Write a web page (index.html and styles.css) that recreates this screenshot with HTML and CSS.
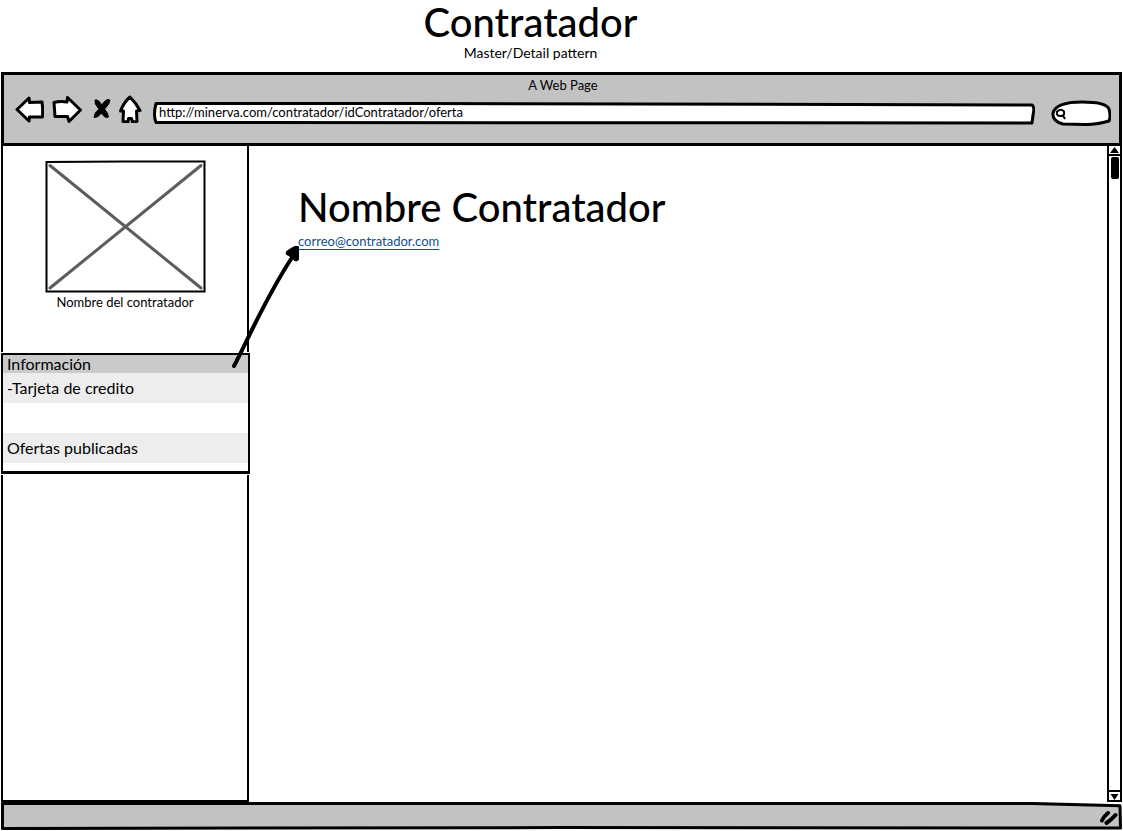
FILE: index.html
```html
<!DOCTYPE html>
<html lang="es">
<head>
<meta charset="utf-8">
<title>Contratador</title>
<link rel="stylesheet" href="styles.css">
</head>
<body>
<div class="page">
  <header class="intro">
    <h1 class="intro-title">Contratador</h1>
    <p class="intro-sub">Master/Detail pattern</p>
  </header>

  <div class="window">
    <div class="chrome">
      <div class="chrome-title">A Web Page</div>
      <div class="toolbar">
        <button class="tool" aria-label="Atrás">
          <svg width="29" height="28" viewBox="0 0 29 28"><path d="M2 14.5 L14 3 L14.5 7.5 L27 7 Q28 14 27.5 22 L14.5 22 L14 26 Z"/></svg>
        </button>
        <button class="tool" aria-label="Adelante">
          <svg width="30" height="28" viewBox="0 0 30 28"><path d="M2 7.500 Q8 6 15 7 L15.500 2.500 L28.500 15 L17 26.500 L15.500 21.500 L3 21.500 Z"/></svg>
        </button>
        <button class="tool tool-stop" aria-label="Detener">
          <svg width="18" height="22" viewBox="0 0 18 22"><path class="solid" d="M2 2 Q5 1 9 7 Q13 0 17 2 Q17 6 11.500 11 Q15 15 15.500 19 Q12 21 8.500 15 Q5 20 1 19.500 Q1 15 6 11 Q1 6 2 2Z"/></svg>
        </button>
        <button class="tool" aria-label="Inicio">
          <svg width="24" height="28" viewBox="0 0 24 28"><path d="M11 2 Q17 8 21 15.500 L17.500 16 L18 26.500 L13.500 27 L12.500 23.500 L9.500 23.500 L9 27 L4 26.500 L4.500 16 L1.500 16 Q5 7 11 2Z"/></svg>
        </button>
        <div class="field address">
          <svg class="sketch" viewBox="0 0 882 23" preserveAspectRatio="none" aria-hidden="true"><path d="M3 1.500 L260 1.500 L879 3 Q882 5 880 13 L879 21 L3 20.500 Q0 13 3 1.500Z"/></svg>
          <input class="field-input" type="text" aria-label="Dirección" value="http://minerva.com/contratador/idContratador/oferta">
        </div>
        <div class="field search">
          <svg class="sketch" viewBox="0 0 60 26" preserveAspectRatio="none" aria-hidden="true"><path d="M12 24 Q1 21 2 13 Q5 2 31 2 Q55 2 58 9 Q60 17 58 21 Q45 25 33 24.500 Z"/></svg>
          <svg class="lens" width="12" height="13" viewBox="0 0 12 13" aria-hidden="true"><path d="M2 3.500 Q6 0 9 3.500 Q10 8 5.500 8 Q1 8 2 3.500Z M8 7.500 L10 11"/></svg>
          <input class="field-input" type="search" aria-label="Buscar">
        </div>
      </div>
    </div>

    <div class="body">
      <aside class="sidebar">
        <figure class="profile">
          <svg class="photo" viewBox="0 0 161 133" role="img" aria-label="Imagen del contratador">
            <path class="cross" d="M5 5.500 L156 128 M156 5.500 L5 128"/>
            <path class="frame" d="M1.500 2 L80 1.500 L159.500 1.500 L159.500 131.500 L1.500 131.500 Z"/>
          </svg>
          <figcaption class="caption">Nombre del contratador</figcaption>
        </figure>
        <nav class="menu">
          <button class="menu-item selected">Información</button>
          <button class="menu-item shaded">-Tarjeta de credito</button>
          <div class="menu-gap"></div>
          <button class="menu-item shaded">Ofertas publicadas</button>
        </nav>
      </aside>
      <main class="detail">
        <h2 class="detail-title">Nombre Contratador</h2>
        <a class="mail" href="mailto:correo@contratador.com">correo@contratador.com</a>
      </main>
      <div class="scrollbar">
        <button class="scroll-btn scroll-up" aria-label="Subir"><svg width="11" height="9" viewBox="0 0 11 9"><path d="M1 7 L5.500 1 L10 7Z"/></svg></button>
        <div class="thumb"></div>
        <button class="scroll-btn scroll-down" aria-label="Bajar"><svg width="11" height="9" viewBox="0 0 11 9"><path d="M1.500 2 L9.500 2 L5.500 8Z"/></svg></button>
      </div>
      <svg class="pointer" width="74" height="128" viewBox="0 0 74 128" aria-hidden="true">
        <path class="shaft" d="M7 122 C18 102 37 56 66 12"/>
        <path class="head" d="M71 3 L71 15 Q70 17 68 16 L62 11 L60 10 Q59 9 61 7 Q66 4 68 3Z"/>
      </svg>
    </div>

    <footer class="status">
      <svg class="sketch" viewBox="0 0 1121 29" preserveAspectRatio="none" aria-hidden="true"><path d="M1.500 1.500 L1030 1.500 L1119 4 L1119.500 27 L560 26.500 L1.500 27.500Z"/></svg>
      <svg class="grip" width="18" height="14" viewBox="0 0 18 14" aria-hidden="true"><path d="M2 9.500 Q4 5 8 2 M6.500 12 Q11 9 15.500 4"/></svg>
    </footer>
  </div>
</div>
</body>
</html>
```
FILE: styles.css
```css
* { box-sizing: border-box; }

body {
  margin: 0;
  background: #fff;
  color: #000;
  font-family: Lato, "Open Sans", sans-serif;
  font-size: 13px;
  line-height: 16px;
}

button, input { font: inherit; color: inherit; }

button {
  padding: 0;
  border: 0;
  background: none;
}

.page {
  display: flex;
  flex-direction: column;
  min-height: 100vh;
  padding: 0 1px 1px;
}

.intro {
  height: 72px;
  padding-right: 62px;
  text-align: center;
}

.intro-title {
  margin: 0;
  font-size: 40px;
  line-height: 44px;
  font-weight: 500;
}

.intro-sub {
  margin: 0;
  font-size: 14px;
  line-height: 18px;
}

.window {
  display: flex;
  flex: 1;
  flex-direction: column;
}

.chrome {
  height: 74px;
  padding: 2px 8px 0 11px;
  border: 3px solid #000;
  background: #c2c2c2;
}

.chrome-title { text-align: center; }

.toolbar {
  display: flex;
  align-items: center;
  gap: 8px;
  height: 32px;
}

.tool svg { display: block; }

.tool path {
  fill: #fff;
  stroke: #000;
  stroke-width: 3;
  stroke-linejoin: round;
}

.tool .solid { fill: #000; stroke-width: 1; }

.tool-stop { margin-left: 3px; }

.field { position: relative; }

.sketch {
  position: absolute;
  inset: 0;
  width: 100%;
  height: 100%;
}

.sketch path {
  fill: #fff;
  stroke: #000;
  stroke-width: 3;
  stroke-linejoin: round;
  vector-effect: non-scaling-stroke;
}

.field-input {
  position: relative;
  display: block;
  width: 100%;
  height: 100%;
  padding: 0 6px 2px;
  border: 0;
  outline: 0;
  background: none;
  appearance: none;
}

.address {
  flex: 1;
  height: 23px;
  margin: 8px 8px 0 2px;
}

.search {
  width: 60px;
  height: 26px;
  margin-top: 8px;
}

.search .field-input { padding-left: 18px; }

.lens {
  position: absolute;
  top: 8px;
  left: 4px;
  fill: none;
  stroke: #000;
  stroke-width: 2;
}

.body {
  position: relative;
  display: flex;
  flex: 1;
}

.sidebar {
  width: 248px;
  border: solid #000;
  border-width: 0 2px 2px;
}

.profile {
  display: flex;
  flex-direction: column;
  align-items: center;
  gap: 1px;
  height: 207px;
  margin: 0;
  padding-top: 14px;
}

.photo { width: 161px; height: 133px; }

.photo path { fill: none; stroke-linecap: round; }

.photo .cross { stroke: #5c5c5c; stroke-width: 3; }

.photo .frame { stroke: #000; stroke-width: 2; }

.menu {
  position: relative;
  margin: 0 -3px 0 -2px;
  padding-bottom: 8px;
  border: solid #000;
  border-width: 2px 2px 3px;
  background: #fff;
  box-shadow: 0 0 0 1px #fff;
}

.menu-item {
  display: block;
  width: 100%;
  height: 30px;
  padding: 0 4px;
  font-size: 16px;
  line-height: 18px;
  text-align: left;
}

.selected { height: 18px; background: #cacaca; }

.shaded { background: #ededed; }

.menu-gap { height: 30px; }

.detail {
  flex: 1;
  padding: 37px 49px;
}

.detail-title {
  margin: 0 0 2px;
  font-size: 40px;
  line-height: 48px;
  font-weight: 500;
}

.mail {
  color: #0f4f8f;
  text-underline-offset: 3px;
}

.scrollbar {
  display: flex;
  flex-direction: column;
  width: 15px;
  border: solid #000;
  border-width: 0 2px;
}

.scroll-btn { height: 10px; }

.scroll-btn svg { display: block; }

.scroll-up { border-bottom: 2px solid #000; }

.scroll-down { height: 12px; border: solid #000; border-width: 2px 0; }

.thumb {
  width: 8px;
  height: 22px;
  margin: 1px 2px auto;
  border-radius: 2px;
  background: #000;
}

.pointer {
  position: absolute;
  top: 98px;
  left: 226px;
}

.shaft {
  fill: none;
  stroke: #000;
  stroke-width: 4;
  stroke-linecap: round;
}

.head { stroke: #000; stroke-width: 2; stroke-linejoin: round; }

.status {
  position: relative;
  display: flex;
  align-items: center;
  justify-content: flex-end;
  height: 28px;
  padding: 3px 4px 0;
}

.status .sketch path { fill: #c2c2c2; }

.grip {
  position: relative;
  fill: none;
  stroke: #000;
  stroke-width: 4;
  stroke-linecap: round;
}
```
